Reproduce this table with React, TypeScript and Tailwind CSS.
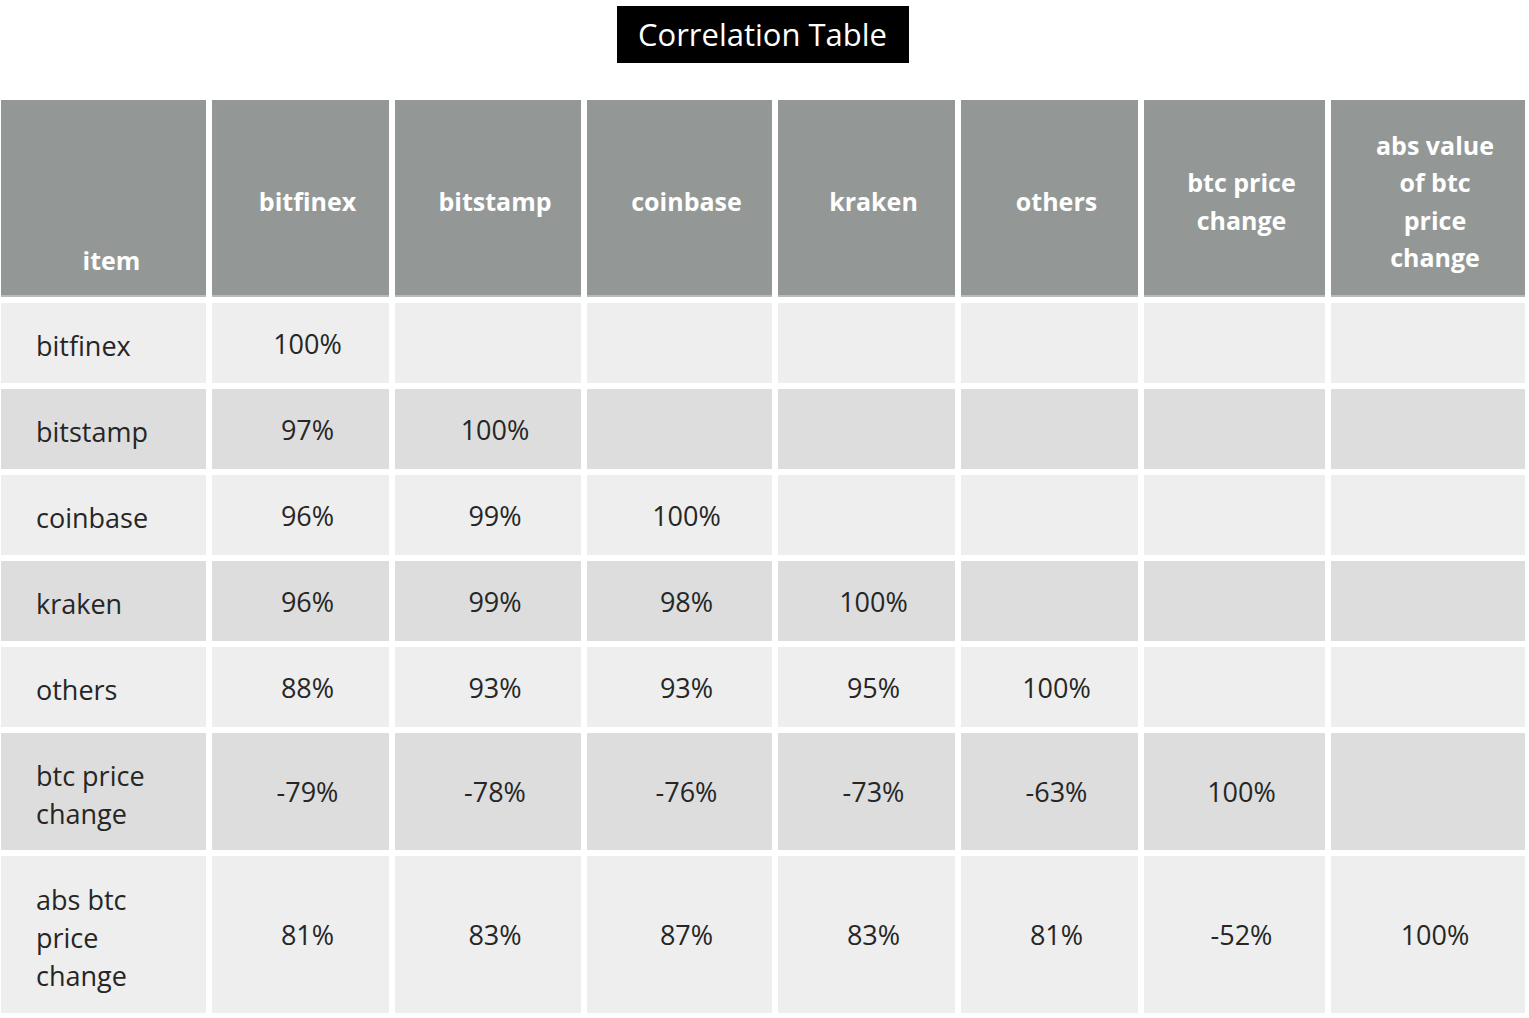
const columns = ["bitfinex", "bitstamp", "coinbase", "kraken", "others", "btc price change", "abs value of btc price change"];

const headerLines: string[][] = [
  ["bitfinex"],
  ["bitstamp"],
  ["coinbase"],
  ["kraken"],
  ["others"],
  ["btc price", "change"],
  ["abs value", "of btc", "price", "change"],
];

interface Row {
  label: string[];
  values: string[];
  height: string;
}

const rows: Row[] = [
  { label: ["bitfinex"], values: ["100%"], height: "h-[80px]" },
  { label: ["bitstamp"], values: ["97%", "100%"], height: "h-[80px]" },
  { label: ["coinbase"], values: ["96%", "99%", "100%"], height: "h-[80px]" },
  { label: ["kraken"], values: ["96%", "99%", "98%", "100%"], height: "h-[80px]" },
  { label: ["others"], values: ["88%", "93%", "93%", "95%", "100%"], height: "h-[80px]" },
  {
    label: ["btc price", "change"],
    values: ["-79%", "-78%", "-76%", "-73%", "-63%", "100%"],
    height: "h-[117px]",
  },
  {
    label: ["abs btc", "price", "change"],
    values: ["81%", "83%", "87%", "83%", "81%", "-52%", "100%"],
    height: "h-[157px]",
  },
];

const font = { fontFamily: '"Open Sans", "Noto Sans", sans-serif' };

export default function App() {
  return (
    <div className="w-[1529px] h-[1018px] bg-white overflow-hidden" style={font}>
      <div className="flex justify-center pt-[6px] pr-[4px]">
        <div className="bg-black text-white text-[31px] leading-[57px] h-[57px] w-[292px] text-center">
          Correlation Table
        </div>
      </div>

      <div className="mt-[37px] pl-[1px] grid grid-cols-[205px_177px_186px_185px_177px_177px_181px_194px] gap-[6px]">
        <div className="h-[197px] bg-[#939896] border-b-2 border-[#b8bbba] flex items-end justify-center pb-[16px] pl-[16px] text-white font-bold text-[25px] leading-[37px]">
          item
        </div>
        {headerLines.map((lines, i) => (
          <div
            key={columns[i]}
            className="h-[197px] bg-[#939896] border-b-2 border-[#b8bbba] flex flex-col items-center justify-center pt-[8px] pl-[14px] text-white font-bold text-[25px] leading-[37.5px] text-center"
          >
            {lines.map((line) => (
              <span key={line}>{line}</span>
            ))}
          </div>
        ))}

        {rows.map((row, r) => {
          const bg = r % 2 === 0 ? "bg-[#edeeed]" : "bg-[#dcdddc]";
          return [
            <div
              key={`${r}-label`}
              className={`${row.height} ${bg} flex flex-col justify-center pl-[35px] pt-[6px] text-[#262626] text-[27px] leading-[38px]`}
            >
              {row.label.map((line) => (
                <span key={line}>{line}</span>
              ))}
            </div>,
            ...columns.map((col, c) => (
              <div
                key={`${r}-${col}`}
                className={`${row.height} ${bg} flex items-center justify-center pl-[14px] pt-[1px] text-[#262626] text-[27px] leading-[38px]`}
              >
                {row.values[c] ?? ""}
              </div>
            )),
          ];
        })}
      </div>
    </div>
  );
}
